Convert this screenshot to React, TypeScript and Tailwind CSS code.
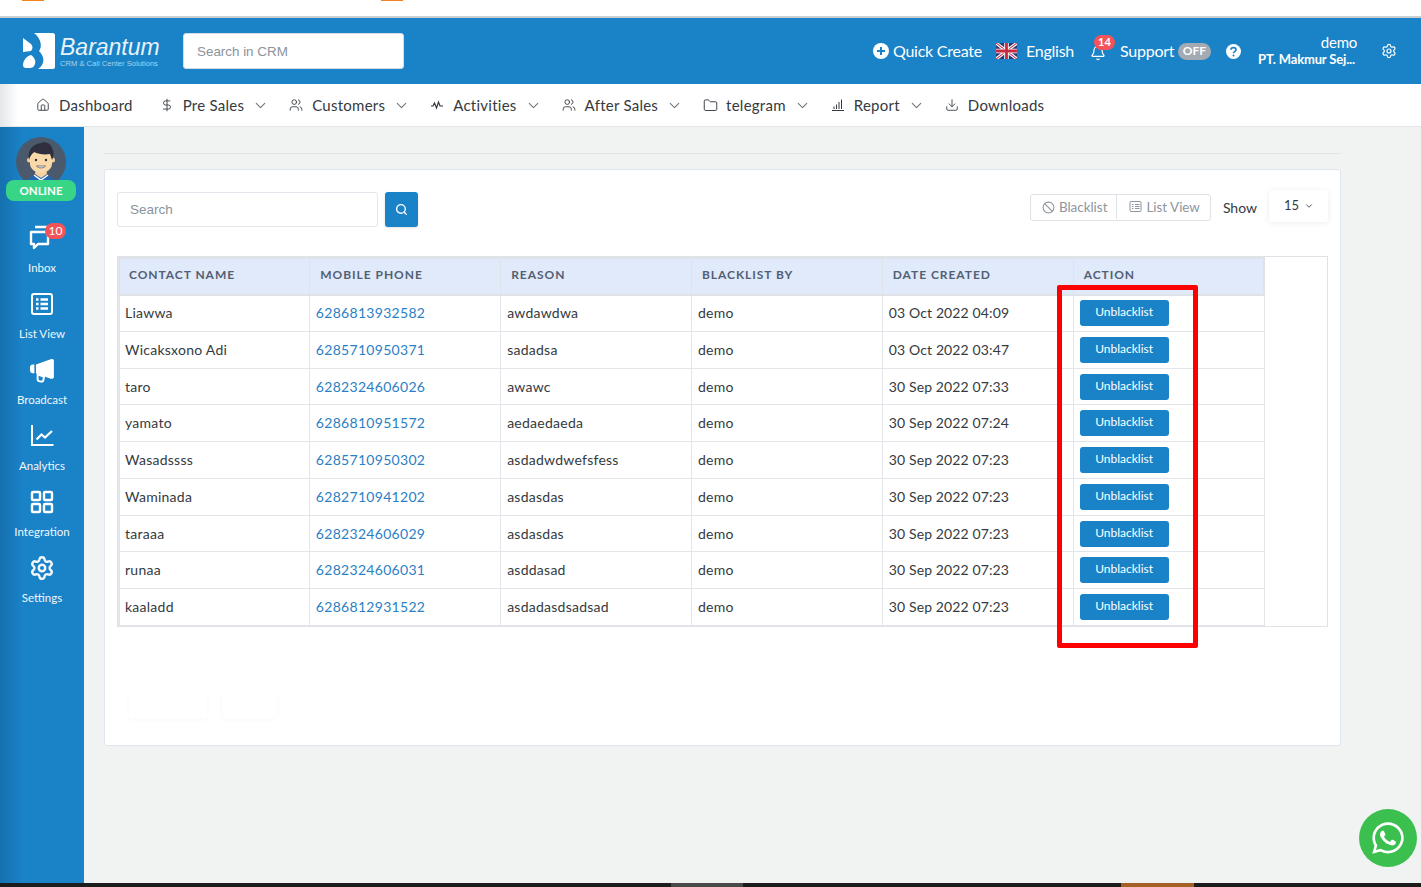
import { Ban, Bell, ChevronDown, DollarSign, Download, Folder, Home, Search, Settings, Users } from "lucide-react"
import { FaWhatsapp } from "react-icons/fa"

const rows = [
  ["Liawwa", "6286813932582", "awdawdwa", "demo", "03 Oct 2022 04:09"],
  ["Wicaksxono Adi", "6285710950371", "sadadsa", "demo", "03 Oct 2022 03:47"],
  ["taro", "6282324606026", "awawc", "demo", "30 Sep 2022 07:33"],
  ["yamato", "6286810951572", "aedaedaeda", "demo", "30 Sep 2022 07:24"],
  ["Wasadssss", "6285710950302", "asdadwdwefsfess", "demo", "30 Sep 2022 07:23"],
  ["Waminada", "6282710941202", "asdasdas", "demo", "30 Sep 2022 07:23"],
  ["taraaa", "6282324606029", "asdasdas", "demo", "30 Sep 2022 07:23"],
  ["runaa", "6282324606031", "asddasad", "demo", "30 Sep 2022 07:23"],
  ["kaaladd", "6286812931522", "asdadasdsadsad", "demo", "30 Sep 2022 07:23"],
]

const Activity = () => (
  <svg width="14" height="14" viewBox="0 0 14 14" fill="none" stroke="#343a40" strokeWidth="1.2">
    <path d="M1 8h2l1.5-3 2 5 2-6 1.5 4h3" />
  </svg>
)

const Bars = () => (
  <svg width="14" height="14" viewBox="0 0 14 14" fill="none" stroke="#343a40" strokeWidth="1">
    <path d="M1 12.5h12M3 11V8.5M5.5 11V6.5M8 11V4M10.5 11V1.5" />
  </svg>
)

const navItems = [
  { label: "Dashboard", icon: <Home size={14} strokeWidth={1.5} />, caret: false },
  { label: "Pre Sales", icon: <DollarSign size={14} strokeWidth={1.5} />, caret: true },
  { label: "Customers", icon: <Users size={14} strokeWidth={1.5} />, caret: true },
  { label: "Activities", icon: <Activity />, caret: true },
  { label: "After Sales", icon: <Users size={14} strokeWidth={1.5} />, caret: true },
  { label: "telegram", icon: <Folder size={15} strokeWidth={1.5} />, caret: true },
  { label: "Report", icon: <Bars />, caret: true },
  { label: "Downloads", icon: <Download size={14} strokeWidth={1.5} />, caret: false },
]

const InboxIcon = () => (
  <svg width="26" height="26" viewBox="0 0 26 26" fill="none" stroke="white" strokeWidth="2.4">
    <path d="M6 2h17M23 2v10" />
    <path d="M2 7h17v12H9l-4 4v-4H2z" strokeLinejoin="round" />
  </svg>
)

const ListIcon = () => (
  <svg width="22" height="22" viewBox="0 0 22 22" fill="none" stroke="white">
    <rect x="1" y="1" width="20" height="20" rx="2" strokeWidth="2" />
    <path d="M5 6.5h2.500M5 11h2.500M5 15.5h2.500M9.500 6.500H17M9.500 11H17M9.500 15.500H17" strokeWidth="2.400" />
  </svg>
)

const MegaphoneIcon = () => (
  <svg width="27" height="26" viewBox="0 0 23 24" fill="white">
    <path d="M0 9.500C0 8 1 7 2.500 7H4v8H2.500C1 15 0 14 0 12.500z" />
    <path d="M5.500 7 19 2c1.500-.6 3-.2 3 1.500v15c0 1.500-1.500 2-3 1.500L5.500 15z" />
    <path d="m7 16 6 2.200-.8 3.500c-.2.800-1 1.200-1.800 1l-2.400-.6c-.7-.2-1.100-.8-1-1.500z" fill="none" stroke="white" strokeWidth="1.800" />
  </svg>
)

const ChartIcon = () => (
  <svg width="24" height="24" viewBox="0 0 24 24" fill="none" stroke="white" strokeWidth="2">
    <path d="M2 1v20h21.500" />
    <path d="m6.500 15.500 5-5 3.500 3 7-6.500" strokeWidth="2.200" />
  </svg>
)

const GridIcon = () => (
  <svg width="24" height="24" viewBox="0 0 24 24" fill="none" stroke="white" strokeWidth="2.400">
    <rect x="2" y="2" width="8" height="8" rx="1" />
    <rect x="14" y="2" width="8" height="8" rx="1" />
    <rect x="2" y="14" width="8" height="8" rx="1" />
    <rect x="14" y="14" width="8" height="8" rx="1" />
  </svg>
)

const sideItems = [
  { label: "List View", icon: <ListIcon /> },
  { label: "Broadcast", icon: <MegaphoneIcon /> },
  { label: "Analytics", icon: <ChartIcon /> },
  { label: "Integration", icon: <GridIcon /> },
  { label: "Settings", icon: <Settings size={26} strokeWidth={2.2} /> },
]

const Avatar = () => (
  <svg width="50" height="50" viewBox="0 0 50 50" className="rounded-full bg-[#4a5a6c]">
    <path d="M8 50c1-8 8-12 17-12s16 4 17 12z" fill="#2265b5" />
    <path d="M19 37l6 4 6-4-1-6H20z" fill="#f5d2a3" />
    <path d="M18 38l7 5 7-5" fill="none" stroke="white" strokeWidth="1.500" />
    <circle cx="13.500" cy="23" r="2.500" fill="#f5cf9c" />
    <circle cx="36.500" cy="23" r="2.500" fill="#f5cf9c" />
    <path d="M14 20c0-8 22-8 22 0v7c0 5-6 9-11 9s-11-4-11-9z" fill="#f9d8a9" />
    <path d="M13 23c-2-9 3-16 12-17 3-2 10 0 11 5 2 3 2 8 0 12l-2-6c-6 1-12 0-16-2-2 2-4 4-5 8z" fill="#2f2f3f" />
    <circle cx="20" cy="23" r="1.200" fill="#2f2f3f" />
    <circle cx="30" cy="23" r="1.200" fill="#2f2f3f" />
    <path d="M20.500 29c2 2.500 7 2.500 9 0z" fill="white" stroke="#2f2f3f" strokeWidth=".6" />
  </svg>
)

const Flag = () => (
  <svg width="21" height="16" viewBox="0 0 60 46" className="block">
    <rect width="60" height="46" fill="#283a7a" />
    <path d="M0 0l60 46M60 0L0 46" stroke="white" strokeWidth="9" />
    <path d="M0 0l60 46M60 0L0 46" stroke="#c9283e" strokeWidth="3" />
    <path d="M30 0v46M0 23h60" stroke="white" strokeWidth="13" />
    <path d="M30 0v46M0 23h60" stroke="#c9283e" strokeWidth="8" />
  </svg>
)

const Logo = () => (
  <svg width="32" height="36" viewBox="0 0 32 36" fill="white">
    <path d="M11 0h19c1 0 2 1 2 2v32c0 1-1 2-2 2H15c5-3 7-9 4-14-1-2-2-3-3-4 3-3 3-12-5-18z" />
    <path d="M0 5l8 6c2 2 2 5 0 7l-8 1z" />
    <path d="M0 32c0-5 4-9 8-10 3 2 5 5 4 9-1 3-3 4-5 4H3c-2 0-3-1-3-3z" />
  </svg>
)

const HelpIcon = () => (
  <svg width="15" height="15" viewBox="0 0 15 15" className="ml-[15px]">
    <circle cx="7.500" cy="7.500" r="7.500" fill="white" />
    <path d="M5 5.800c0-3 5-3 5 0 0 1.900-2.500 1.700-2.500 3.400" fill="none" stroke="#1a82c7" strokeWidth="1.700" />
    <circle cx="7.500" cy="11.500" r="1" fill="#1a82c7" />
  </svg>
)

const AlignIcon = () => (
  <svg width="13" height="13" viewBox="0 0 13 13" fill="none" stroke="currentColor">
    <rect x="1" y="1.500" width="11" height="10" rx="1" />
    <path d="M3 4.500h1.500M3 6.500h1.500M3 8.500h1.500M6 4.500h4.500M6 6.500h4.500M6 8.500h4.500" />
  </svg>
)

export default function App() {
  return (
    <div className="relative flex h-[887px] w-[1422px] flex-col overflow-hidden border-r border-[#d5d9dc] bg-[#f1f3f3] font-['Lato',sans-serif] text-[#343a40]">
      {/* Strip of the browser page above the app */}
      <div className="flex h-4 shrink-0 bg-white">
        <div className="ml-[22px] h-px w-[22px] bg-[#f58220]" />
        <div className="ml-[337px] h-px w-[22px] bg-[#f58220]" />
      </div>

      {/* Header */}
      <header className="flex h-[68px] shrink-0 items-center border-t-2 border-[#c9cfd3] bg-[#1a82c7] pl-[23px] text-white">
        <Logo />
        <div className="ml-[5px] flex w-[100px] flex-col">
          <span className="font-['Liberation_Sans',sans-serif] text-[23px] leading-[24px] italic text-[#e8f3fa]">Barantum</span>
          <span className="font-['Liberation_Sans',sans-serif] text-[7.600px] leading-[9px] whitespace-nowrap text-[#a9d2ec]">CRM &amp; Call Center Solutions</span>
        </div>
        <input
          placeholder="Search in CRM"
          className="ml-[23px] h-9 w-[221px] rounded-[3px] border border-[#d5dce3] bg-white px-[13px] font-['Liberation_Sans',sans-serif] text-[13.400px] placeholder:text-[#8b939c]"
        />
        <div className="ml-[469px] flex items-center text-base tracking-[-0.25px]">
          <svg width="16" height="16" viewBox="0 0 16 16" className="mr-1">
            <circle cx="8" cy="8" r="8" fill="white" />
            <path d="M8 4v8M4 8h8" stroke="#1a82c7" strokeWidth="2" />
          </svg>
          <span className="w-[89px] whitespace-nowrap">Quick Create</span>
          <span className="mr-[9px] ml-[14px]"><Flag /></span>
          <span className="w-[49px]">English</span>
          <span className="relative top-[2px] mr-[14px] ml-[15px]">
            <Bell size={16} strokeWidth={1.800} />
            <span className="absolute -top-[10px] left-1 flex h-[15px] w-[21px] items-center justify-center rounded-full bg-[#f5535a] text-[11px] font-bold tracking-normal">14</span>
          </span>
          <span className="w-[54px]">Support</span>
          <span className="ml-1 flex h-[17px] w-[33px] items-center justify-center rounded-full bg-[#a3aab1] text-[12px] font-bold tracking-normal">OFF</span>
          <HelpIcon />
          <div className="ml-[17px] flex w-[102px] flex-col items-end pr-[2px] leading-[17px]">
            <span className="pr-[1px] text-[15px]">demo</span>
            <span className="pr-[3px] text-[13px] font-bold tracking-[-0.15px] whitespace-nowrap">PT. Makmur Sej...</span>
          </div>
          <Settings size={16} strokeWidth={1.800} className="ml-[21px]" />
        </div>
      </header>

      {/* Top nav */}
      <nav className="flex h-[43px] shrink-0 items-center gap-5 border-b border-[#e3e6e8] bg-[linear-gradient(90deg,#e4e6e8,#ffffff_18px)] pl-9 text-[15px] tracking-[0.25px]">
        {navItems.map((item) => (
          <div key={item.label} className={item.label === "Dashboard" ? "mr-[7px] flex items-center whitespace-nowrap" : "flex items-center whitespace-nowrap"}>
            <span className="flex w-[23px] shrink-0">{item.icon}</span>
            <span>{item.label}</span>
            {item.caret && <ChevronDown size={17} strokeWidth={1.500} className="ml-2 text-[#6c757d]" />}
          </div>
        ))}
      </nav>

      <div className="flex min-h-0 flex-1">
        {/* Sidebar */}
        <aside className="flex w-[84px] shrink-0 flex-col items-center bg-[linear-gradient(90deg,#1570ae,#1a82c7_22px)] pt-[10px] text-[11.500px] text-[#f1f7fb]">
          <div className="flex w-[82px] flex-col items-center self-start">
            <Avatar />
            <div className="-mt-[7px] flex h-[21px] w-[70px] items-center justify-center rounded-lg bg-[#38d587] font-bold text-white">ONLINE</div>
          </div>
          <div className="mt-6 flex h-[66px] flex-col items-center">
            <span className="relative h-[26px]">
              <InboxIcon />
              <span className="absolute -top-[2px] -right-[11px] flex h-4 w-[21px] items-center justify-center rounded-full bg-[#f5535a] text-xs text-white">10</span>
            </span>
            <span className="mt-2">Inbox</span>
          </div>
          {sideItems.map((item) => (
            <div key={item.label} className="flex h-[66px] flex-col items-center">
              <span className="flex h-[26px] items-center">{item.icon}</span>
              <span className="mt-2">{item.label}</span>
            </div>
          ))}
        </aside>

        {/* Main */}
        <main className="flex-1 pt-[26px] pl-5">
          <div className="w-[1237px] border-t border-[#e2e5e7]" />
          <section className="mt-[15px] h-[577px] w-[1237px] rounded-[3px] border border-[#dfe5ec] bg-white px-3 pt-[22px]">
            <div className="flex items-start justify-between">
              <div className="flex gap-[7px]">
                <input
                  placeholder="Search"
                  className="h-[35px] w-[261px] rounded-[3px] border border-[#e2e5ec] px-3 pb-px font-['Liberation_Sans',sans-serif] text-[13.500px] placeholder:text-[#8b939c]"
                />
                <button className="flex h-[35px] w-[33px] items-center justify-center rounded-[3px] bg-[#1a82c7] text-white shadow-sm">
                  <Search size={13} strokeWidth={2.500} />
                </button>
              </div>
              <div className="-mt-[2px] flex items-start">
                <div className="mt-1 flex h-[27px] items-center rounded-[3px] border border-[#dfe3e7] pb-px text-[13.400px] text-[#8d959d]">
                  <span className="flex h-full items-center gap-[4px] border-r border-[#dfe3e7] pr-[9px] pl-[11px]">
                    <Ban size={13} />
                    Blacklist
                  </span>
                  <span className="flex items-center gap-[4px] pr-[10px] pl-3">
                    <AlignIcon />
                    List View
                  </span>
                </div>
                <span className="mt-[8px] ml-3 text-sm">Show</span>
                <div className="ml-3 flex h-8 w-[59px] items-center rounded-[3px] pl-[15px] text-[13px] shadow-[0_1px_6px_rgba(0,0,0,0.08)]">
                  15
                  <ChevronDown size={10} className="ml-[5px]" />
                </div>
              </div>
            </div>

            <div className="mt-[29px] h-[371px] w-[1211px] border border-[#dfe3e8]">
              <table className="w-[1147px] table-fixed border-collapse text-sm">
                <thead>
                  <tr className="h-[36.700px] border-2 border-t-[2px] border-[#dfe3e8] bg-[#e0eafb] text-left text-xs font-bold tracking-[0.95px] text-[#535f73]">
                    {["CONTACT NAME", "MOBILE PHONE", "REASON", "BLACKLIST BY", "DATE CREATED", "ACTION"].map((h, i) => (
                      <th key={h} className={i === 0 ? "border-r border-[#dfe3e8] pb-[3px] pl-[9px] font-bold" : "border-r border-[#dfe3e8] pb-[3px] pl-[10px] font-bold"}>{h}</th>
                    ))}
                  </tr>
                </thead>
                <tbody>
                  {rows.map((r) => (
                    <tr key={r[1]} className="h-[36.750px] border-b border-[#e2e5ea] tracking-[0.25px]">
                      <td className="border-r border-l-2 border-[#e2e5ea] pl-[5px]">{r[0]}</td>
                      <td className="border-r border-[#e2e5ea] pl-[5.500px] tracking-[0.3px] text-[#2b7fc5]">{r[1]}</td>
                      <td className="border-r border-[#e2e5ea] pl-[6px]">{r[2]}</td>
                      <td className="border-r border-[#e2e5ea] pl-[6px]">{r[3]}</td>
                      <td className="border-r border-[#e2e5ea] pl-[6px] tracking-[0.12px]">{r[4]}</td>
                      <td className="border-r border-[#e2e5ea] pl-[6px]">
                        <button className="flex h-[26px] w-[89px] items-center justify-center rounded-[3px] bg-[#1a82c7] pb-[2px] text-xs tracking-normal text-white">Unblacklist</button>
                      </td>
                    </tr>
                  ))}
                </tbody>
              </table>
            </div>

            {/* Empty pagination boxes, nearly invisible in the picture */}
            <div className="mt-[62px] ml-3 flex gap-[15px]">
              <div className="h-[30px] w-[78px] rounded-[3px] shadow-[0_1px_4px_rgba(0,0,0,0.03)]" />
              <div className="h-[30px] w-[55px] rounded-[3px] shadow-[0_1px_4px_rgba(0,0,0,0.03)]" />
            </div>
          </section>
        </main>
      </div>

      <div className="flex h-1 shrink-0 bg-[#1c1c1c]">
        <div className="ml-[671px] h-full w-[72px] bg-[#4a4a4a]" />
        <div className="ml-[378px] h-full w-[73px] bg-[#a65f25]" />
      </div>

      {/* Annotation on top of the screenshot */}
      <div className="absolute top-[285px] left-[1057px] h-[363px] w-[141px] rounded-[2px] border-[5px] border-[#ff0000]" />

      <button className="absolute top-[809px] left-[1359px] flex size-[58px] items-center justify-center rounded-full bg-[#3bbf4f] text-white">
        <FaWhatsapp size={36} />
      </button>
    </div>
  )
}
